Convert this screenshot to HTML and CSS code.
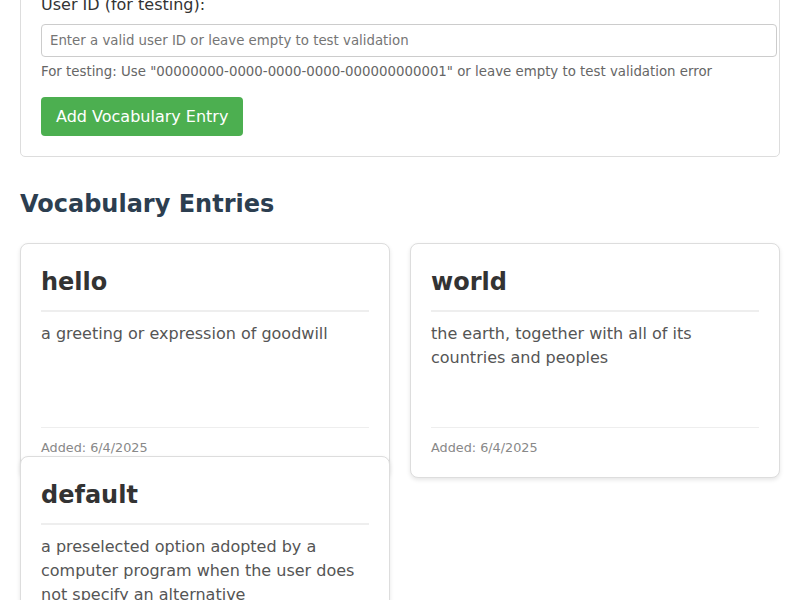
FILE: index.html
```html
<!DOCTYPE html>
<html lang="en">
<head>
<meta charset="utf-8">
<title>Vocabulary</title>
<link rel="stylesheet" href="styles.css">
</head>
<body>
<div class="container">
  <form class="entry-form">
    <label class="field-label" for="user-id">User ID (for testing):</label>
    <input class="field-input" id="user-id" type="text" placeholder="Enter a valid user ID or leave empty to test validation">
    <small class="hint">For testing: Use "00000000-0000-0000-0000-000000000001" or leave empty to test validation error</small>
    <button class="btn-add" type="button">Add Vocabulary Entry</button>
  </form>

  <h2 class="section-title">Vocabulary Entries</h2>

  <div class="card-grid">
    <div class="card">
      <h3 class="card-word">hello</h3>
      <p class="card-def">a greeting or expression of goodwill</p>
      <div class="card-footer">Added: 6/4/2025</div>
    </div>
    <div class="card">
      <h3 class="card-word">world</h3>
      <p class="card-def">the earth, together with all of its countries and peoples</p>
      <div class="card-footer">Added: 6/4/2025</div>
    </div>
    <div class="card">
      <h3 class="card-word">default</h3>
      <p class="card-def">a preselected option adopted by a computer program when the user does not specify an alternative</p>
      <div class="card-footer">Added: 6/4/2025</div>
    </div>
  </div>
</div>
</body>
</html>
```

FILE: styles.css
```css
html, body {
  margin: 0;
  padding: 0;
  background: #fff;
}
html {
  overflow: hidden;
}
body {
  font-family: "DejaVu Sans", sans-serif;
  line-height: 1.5;
  color: #333;
}
.container {
  padding: 0 20px;
}
.entry-form {
  margin: -28px 0 29px;
  padding: 20px;
  border: 1px solid #ddd;
  border-radius: 5px;
  background: #fff;
}
.field-label {
  display: block;
  font-size: 16px;
  color: #333;
  margin-bottom: 7px;
}
.field-input {
  display: block;
  width: 100%;
  box-sizing: content-box;
  padding: 8px;
  border: 1px solid #ccc;
  border-radius: 4px;
  font-family: "DejaVu Sans", sans-serif;
  font-size: 13.33px;
  line-height: normal;
  margin: 0;
}
.field-input::placeholder {
  color: #757575;
}
.hint {
  display: block;
  margin-top: 4px;
  font-size: 13.33px;
  line-height: 21px;
  color: #666;
}
.btn-add {
  margin-top: 15px;
  padding: 10px 15px;
  background: #4caf50;
  color: #fff;
  border: none;
  border-radius: 4px;
  font-family: "DejaVu Sans", sans-serif;
  font-size: 16px;
  line-height: normal;
}
.section-title {
  margin: 0 0 21px;
  font-size: 24px;
  font-weight: bold;
  color: #2c3e50;
}
.card-grid {
  display: grid;
  grid-template-columns: 1fr 1fr;
  grid-auto-rows: 193px;
  gap: 20px;
}
.card {
  box-sizing: border-box;
  height: 235px;
  display: flex;
  flex-direction: column;
  padding: 20px;
  border: 1px solid #ddd;
  border-radius: 8px;
  background: #fff;
  box-shadow: 0 2px 4px rgba(0, 0, 0, 0.1);
}
.card-word {
  margin: 0 0 10px;
  padding-bottom: 10px;
  border-bottom: 2px solid #eee;
  font-size: 24px;
  font-weight: bold;
  color: #333;
}
.card-def {
  flex: 1;
  margin: 0;
  font-size: 16px;
  color: #555;
}
.card-footer {
  padding-top: 10px;
  border-top: 1px solid #eee;
  font-size: 12.8px;
  color: #888;
}
```
